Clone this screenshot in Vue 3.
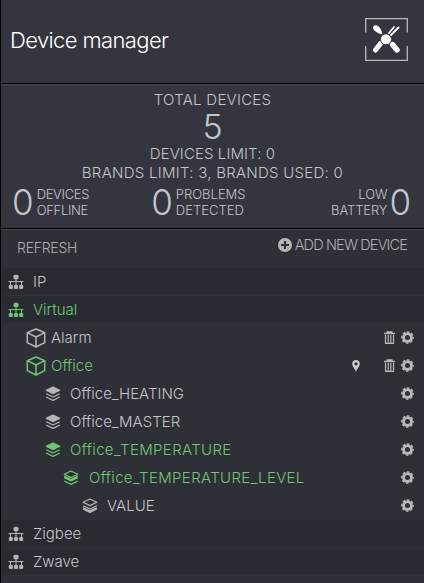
<template>
  <div class="device-manager">
    <header class="header">
      <h1>Device manager</h1>
      <svg class="logo" viewBox="0 0 43 43">
        <path d="M.7 14.500V.7h41.600v13.800M.7 28v14.300h41.600V28" fill="none" stroke="#b9b9bd" stroke-width="1.300" />
        <path d="M8 9.500c0-2 3-3 5-1.500 2.500 2 3.500 4.500 4.500 8.500-4-1-9.500-3.500-9.500-7z" fill="#fff" />
        <g stroke="#fff" stroke-linecap="round" fill="none">
          <path d="M24 15l5-6M26 17l7.500-7.500" stroke-width="1.900" />
          <path d="M15.500 25.500l-5 6.500" stroke-width="5" />
          <path d="M27.500 26.500l4.500 5.500" stroke-width="5.400" />
        </g>
        <circle cx="21" cy="21.300" r="5.500" fill="#fff" stroke="#35353f" stroke-width="1" />
      </svg>
    </header>

    <section class="summary">
      <div class="label">TOTAL DEVICES</div>
      <div class="total">5</div>
      <div class="label limit">DEVICES LIMIT: 0</div>
      <div class="label brands">BRANDS LIMIT: 3, BRANDS USED: 0</div>
      <div class="counters">
        <div v-for="c in counters" :key="c.name" class="counter" :class="c.name">
          <span class="count">{{ c.count }}</span>
          <span class="caption">{{ c.lines[0] }}<br />{{ c.lines[1] }}</span>
        </div>
      </div>
    </section>

    <nav class="toolbar">
      <a class="refresh">REFRESH</a>
      <a class="add">
        <svg width="14" height="14" viewBox="0 0 14 14">
          <circle cx="7" cy="7" r="7" fill="#b5b5b8" />
          <path d="M7 3v8M3 7h8" stroke="#2f2f38" stroke-width="2.200" />
        </svg>
        <span>ADD NEW DEVICE</span>
      </a>
    </nav>

    <ul class="tree">
      <li
        v-for="item in items"
        :key="item.name"
        :class="['level-' + item.level, { active: item.active }]"
      >
        <svg v-if="item.icon === 'network'" class="icon" width="16" height="16" viewBox="0 0 16 16">
          <path d="M8 4v8M2.500 12V7.500h11V12M.5 7.500h15" fill="none" stroke="currentColor" stroke-width="1" />
          <rect x="5.500" y=".8" width="5" height="4.400" rx="1.500" fill="currentColor" />
          <rect x=".8" y="11" width="4" height="4" rx="1.200" fill="currentColor" />
          <rect x="11.200" y="11" width="4" height="4" rx="1.200" fill="currentColor" />
          <rect x="6" y="11" width="4" height="4" rx="1.200" fill="currentColor" />
        </svg>
        <svg v-else-if="item.icon === 'cube'" class="icon cube" width="20" height="20" viewBox="0 0 20 20">
          <path
            d="M10 1l8.700 3.700v10L10 19l-8.700-4.300v-10zM1.300 4.700L10 9l8.700-4.300M10 9v10"
            fill="none"
            stroke="currentColor"
            stroke-width="1.500"
            stroke-linejoin="round"
          />
        </svg>
        <svg v-else class="icon" width="16" height="16" viewBox="0 0 16 16">
          <g fill="none" stroke="currentColor" stroke-width="1.200" stroke-linejoin="round">
            <path d="M8 1l6.800 3.300L8 7.600 1.200 4.300z" :fill="item.fill === 0 ? 'currentColor' : 'none'" />
            <path d="M1.200 7.700L8 11l6.800-3.300" />
            <path v-if="item.fill === 1" d="M1.200 5.500v2.200L8 11l6.800-3.300V5.500L8 8.800z" fill="currentColor" stroke="none" />
            <path d="M1.200 11L8 14.400l6.800-3.400" />
            <path v-if="item.fill === 2" d="M1.200 9v2.200L8 14.500l6.800-3.300V9L8 12.300z" fill="currentColor" stroke="none" />
          </g>
        </svg>
        <span class="name" :class="{ wide: item.wide }">{{ item.name }}</span>
        <span class="actions">
          <svg v-if="item.pin" class="pin" width="8" height="12" viewBox="0 0 8 12">
            <path d="M4 0a3.800 3.800 0 0 0-3.800 3.800C.2 6.500 2.500 8 4 12c1.500-4 3.800-5.500 3.800-8.200A3.800 3.800 0 0 0 4 0zm0 2.200a1.600 1.600 0 1 1 0 3.200A1.600 1.600 0 0 1 4 2.200z" fill="#c8c8cb" fill-rule="evenodd" />
          </svg>
          <svg v-if="item.trash" class="trash" width="11" height="13" viewBox="0 0 11 13">
            <path d="M2.500 1h6M0 2.500h11" stroke="#b9b9bc" stroke-width="1.300" />
            <path d="M1.500 4v8.300h8V4M4.200 4v8M6.800 4v8" fill="none" stroke="#b9b9bc" stroke-width="1.200" />
          </svg>
          <svg v-if="item.level > 0" width="13" height="13" viewBox="0 0 13 13">
            <circle cx="6.500" cy="6.500" r="3.900" fill="none" stroke="#b9b9bc" stroke-width="2.800" />
            <circle cx="6.500" cy="6.500" r="5.600" fill="none" stroke="#b9b9bc" stroke-width="1.500" stroke-dasharray="2.600 1.798" stroke-dashoffset="1.300" />
          </svg>
        </span>
      </li>
    </ul>
  </div>
</template>

<script setup>
const counters = [
  { name: 'offline', count: 0, lines: ['DEVICES', 'OFFLINE'] },
  { name: 'problems', count: 0, lines: ['PROBLEMS', 'DETECTED'] },
  { name: 'battery', count: 0, lines: ['LOW', 'BATTERY'] }
]

const items = [
  { name: 'IP', icon: 'network', level: 0 },
  { name: 'Virtual', icon: 'network', level: 0, active: true },
  { name: 'Alarm', icon: 'cube', level: 1, trash: true },
  { name: 'Office', icon: 'cube', level: 1, active: true, pin: true, trash: true },
  { name: 'Office_HEATING', icon: 'layers', fill: 0, level: 2 },
  { name: 'Office_MASTER', icon: 'layers', fill: 0, level: 2 },
  { name: 'Office_TEMPERATURE', icon: 'layers', fill: 0, level: 2, active: true, wide: true },
  { name: 'Office_TEMPERATURE_LEVEL', icon: 'layers', fill: 1, level: 3, active: true, wide: true },
  { name: 'VALUE', icon: 'layers', fill: 2, level: 4 },
  { name: 'Zigbee', icon: 'network', level: 0 },
  { name: 'Zwave', icon: 'network', level: 0 }
]
</script>

<style>
body {
  margin: 0;
  background: #2f2f38;
}
</style>

<style scoped>
.device-manager {
  box-sizing: border-box;
  width: 424px;
  height: 583px;
  overflow: hidden;
  border-left: 1px solid #000;
  background: #2f2f38;
  color: #c3c6c9;
  font-family: Inter, 'Liberation Sans', sans-serif;
  font-weight: 300;
  white-space: nowrap;
}
.header {
  box-sizing: border-box;
  height: 84px;
  padding: 0 16px 4px 9px;
  display: flex;
  align-items: center;
  justify-content: space-between;
  background: #35353f;
  border-bottom: 1px solid #000;
}
h1 {
  margin: 0;
  color: #fff;
  font-size: 22px;
  font-weight: 300;
  letter-spacing: -0.62px;
}
.logo {
  width: 43px;
  height: 43px;
}
.summary {
  box-sizing: border-box;
  height: 145px;
  padding-top: 6px;
  background: #35353f;
  border-top: 1px solid #48484e;
  border-bottom: 1px solid #000;
  text-align: center;
}
.label {
  height: 18px;
  line-height: 18px;
  font-size: 15px;
  letter-spacing: 0.27px;
}
.limit {
  letter-spacing: 0.1px;
}
.total {
  height: 36px;
  line-height: 36px;
  font-size: 34px;
}
.brands {
  margin-top: 1px;
}
.counters {
  display: flex;
  padding: 0 13px 0 11px;
  margin-top: 2px;
}
.counter {
  display: flex;
  align-items: center;
  gap: 3px;
}
.problems {
  margin-left: 62px;
}
.battery {
  flex-direction: row-reverse;
  gap: 2px;
  margin-left: auto;
}
.count {
  font-size: 35px;
  line-height: 36px;
}
.caption {
  font-size: 13px;
  line-height: 16px;
  text-align: left;
}
.offline .caption {
  letter-spacing: -0.3px;
}
.battery .caption {
  text-align: right;
  letter-spacing: -0.1px;
}
.toolbar {
  box-sizing: border-box;
  height: 39px;
  padding: 0 17px 0 16px;
  display: flex;
  justify-content: space-between;
  border-top: 1px solid #48484e;
  color: #aeaeb3;
}
.refresh {
  font-size: 14px;
  line-height: 35px;
  letter-spacing: -0.25px;
}
.add {
  display: flex;
  align-items: center;
  gap: 3px;
  height: 29px;
  font-size: 14.5px;
  letter-spacing: -0.85px;
}
.tree {
  margin: 0 0 0 1px;
  padding: 0;
  list-style: none;
}
li {
  box-sizing: border-box;
  height: 28px;
  display: flex;
  align-items: center;
  padding-right: 10px;
  padding-bottom: 1px;
  font-size: 15px;
}
.name {
  margin-left: 9px;
}
.wide {
  letter-spacing: 0.34px;
}
.cube + .name {
  margin-left: 5px;
}
.level-0 {
  padding-left: 6px;
  padding-bottom: 0;
  background: #2a2a33;
  border-bottom: 1px solid #2f2f38;
}
.level-1 {
  padding-left: 24px;
}
.level-2 {
  padding-left: 43px;
}
.level-3 {
  padding-left: 61px;
}
.level-3 .name {
  margin-left: 10px;
}
.level-4 {
  padding-left: 80px;
}
.active {
  color: #6dc96f;
}
.icon {
  flex: none;
  color: #b5b7b7;
}
.active .icon {
  color: #6dc96f;
}
.actions {
  display: flex;
  align-items: center;
  margin-left: auto;
}
.pin {
  margin-right: 24px;
}
.trash {
  margin-right: 6px;
}
</style>
